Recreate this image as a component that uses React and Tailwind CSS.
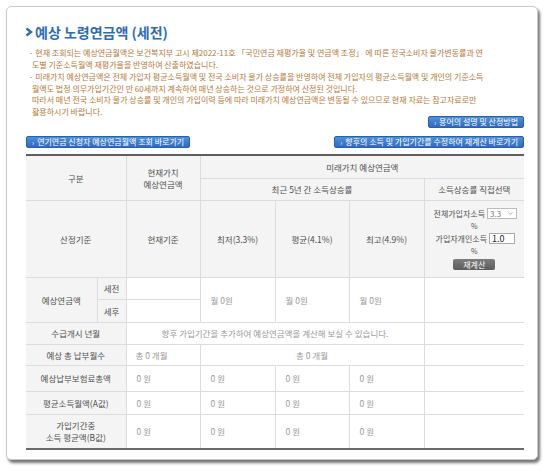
import { ChevronDown } from 'lucide-react';

const font = { fontFamily: '"Noto Sans CJK KR", "Noto Sans", sans-serif' };

// table cell presets
const th = 'border border-[#dcdcdc] bg-[#f4f4f4] text-center align-middle font-normal text-[#505050]';
const td = 'border border-[#dcdcdc] bg-white align-middle text-[#999]';

function LinkButton({ children }) {
  return (
    <button className="h-[12px] px-[5px] rounded-[2px] border border-[#2a5fa9] bg-gradient-to-b from-[#4f8fd9] to-[#2f6bbf] text-white text-[8px] leading-[10px] whitespace-nowrap flex items-center gap-[3px]">
      <span className="text-[7px]">›</span>
      {children}
    </button>
  );
}

function RateForm() {
  return (
    <div className="flex flex-col items-center text-[8px] leading-[12px] text-[#505050]">
      <div className="flex items-center gap-[2px] pl-[2px]">
        <span>전체가입자소득</span>
        <span className="inline-flex items-center h-[11px] w-[30px] border border-[#bbb] bg-white px-[2px] justify-between">
          <select className="appearance-none bg-transparent text-[8px] leading-[9px] text-[#777] outline-none w-[16px]" defaultValue="3.3">
            <option>3.3</option>
            <option>4.1</option>
            <option>4.9</option>
          </select>
          <ChevronDown size={7} strokeWidth={2} className="text-[#777]" />
        </span>
      </div>
      <span className="text-[7px] leading-[13px]">%</span>
      <div className="flex items-center gap-[2px] pl-[2px]">
        <span>가입자개인소득</span>
        <input
          readOnly
          value="1.0"
          className="h-[11px] w-[26px] border border-[#aaa] bg-white px-[2px] text-[9px] leading-[9px] text-[#222] outline-none"
        />
      </div>
      <span className="text-[7px] leading-[13px]">%</span>
      <button className="mt-[1px] h-[11px] px-[10px] rounded-[2px] bg-gradient-to-b from-[#7d7d7d] to-[#5c5c5c] text-white text-[8px] leading-[11px]">
        재계산
      </button>
    </div>
  );
}

export default function App() {
  return (
    <div className="w-[550px] h-[474px] bg-white p-[6px] pr-[12px] pb-[14px]" style={font}>
      <div className="h-full rounded-[5px] border border-[#c8c8c8] bg-white shadow-[2px_3px_3px_rgba(0,0,0,0.55)] pl-[19px] pr-[13px] pt-[17px]">
        {/* Title */}
        <h1 className="flex items-center gap-[2px] -ml-[1px] h-[16px] text-[14px] font-bold text-[#2e6cb5] leading-[16px]">
          <svg width="8" height="10" viewBox="0 0 8 10" className="shrink-0">
            <polyline points="1.5,1.5 6,5 1.5,8.5" fill="none" stroke="#2e6cb5" strokeWidth="2.4" />
          </svg>
          예상 노령연금액 (세전)
        </h1>

        {/* Notices */}
        <div className="mt-[7px] text-[8px] leading-[11.5px] text-[#b5783a] whitespace-nowrap">
          <p className="pl-[6px] -indent-[3px]">
            · 현재 조회되는 예상연금월액은 보건복지부 고시 제2022-11호 「국민연금 재평가율 및 연금액 조정」 에 따른 전국소비자 물가변동률과 연<br />
            도별 기준소득월액 재평가율을 반영하여 산출하였습니다.
          </p>
          <p className="mt-[1px] pl-[6px] -indent-[3px]">
            · 미래가치 예상연금액은 전체 가입자 평균소득월액 및 전국 소비자 물가 상승률을 반영하여 전체 가입자의 평균소득월액 및 개인의 기준소득<br />
            월액도 법정 의무가입기간인 만 60세까지 계속하여 매년 상승하는 것으로 가정하여 산정된 것입니다.<br />
            따라서 매년 전국 소비자 물가 상승률 및 개인의 가입이력 등에 따라 미래가치 예상연금액은 변동될 수 있으므로 현재 자료는 참고자료로만<br />
            활용하시기 바랍니다.
          </p>
        </div>

        {/* Shortcut buttons */}
        <div className="flex justify-end -mt-[1px]">
          <LinkButton>용어의 설명 및 산정방법</LinkButton>
        </div>
        <div className="mt-[8px] flex justify-between">
          <LinkButton>연기연금 신청자 예상연금월액 조회 바로가기</LinkButton>
          <LinkButton>향후의 소득 및 가입기간를 수정하여 재계산 바로가기</LinkButton>
        </div>

        {/* Pension table */}
        <table className="mt-[6px] w-[498px] table-fixed border-collapse border-t-2 border-t-[#5e5e5e] border-b-2 border-b-[#6a6a6a] text-[8.5px] leading-[12px]">
          <colgroup>
            <col className="w-[71px]" />
            <col className="w-[29px]" />
            <col className="w-[74px]" />
            <col className="w-[75px]" />
            <col className="w-[74px]" />
            <col className="w-[75px]" />
            <col className="w-[100px]" />
          </colgroup>
          <tbody>
            <tr className="h-[23px]">
              <th rowSpan={2} colSpan={2} className={`${th} border-l-0`}>구분</th>
              <th rowSpan={2} className={th}>현재가치<br />예상연금액</th>
              <th colSpan={4} className={`${th} border-r-0`}>미래가치 예상연금액</th>
            </tr>
            <tr className="h-[22px]">
              <th colSpan={3} className={th}>최근 5년 간 소득상승률</th>
              <th className={`${th} border-r-0`}>소득상승률 직접선택</th>
            </tr>
            <tr className="h-[77px]">
              <th colSpan={2} className={`${th} border-l-0`}>산정기준</th>
              <th className={th}>현재기준</th>
              <th className={th}>최저(3.3%)</th>
              <th className={th}>평균(4.1%)</th>
              <th className={th}>최고(4.9%)</th>
              <th className={`${th} border-r-0`}>
                <RateForm />
              </th>
            </tr>
            <tr className="h-[22px]">
              <th rowSpan={2} className={`${th} border-l-0`}>예상연금액</th>
              <th className={th}>세전</th>
              <td className={td}></td>
              <td rowSpan={2} className={`${td} pl-[10px] text-[#3d6ea6]`}>월 0원</td>
              <td rowSpan={2} className={`${td} pl-[10px] text-[#3d6ea6]`}>월 0원</td>
              <td rowSpan={2} className={`${td} pl-[10px] text-[#3d6ea6]`}>월 0원</td>
              <td rowSpan={2} className={`${td} border-r-0`}></td>
            </tr>
            <tr className="h-[23px]">
              <th className={th}>세후</th>
              <td className={td}></td>
            </tr>
            <tr className="h-[22px]">
              <th colSpan={2} className={`${th} border-l-0`}>수급개시 년월</th>
              <td colSpan={4} className={`${td} text-center`}>
                향후 가입기간을 추가하여 예상연금액을 계산해 보실 수 있습니다.
              </td>
              <td className={`${td} border-r-0`}></td>
            </tr>
            <tr className="h-[21px]">
              <th colSpan={2} className={`${th} border-l-0`}>예상 총 납부월수</th>
              <td className={`${td} pl-[9px]`}>총 0 개월</td>
              <td colSpan={3} className={`${td} text-center`}>총 0 개월</td>
              <td className={`${td} border-r-0`}></td>
            </tr>
            <tr className="h-[26px]">
              <th colSpan={2} className={`${th} border-l-0`}>예상납부보험료총액</th>
              <td className={`${td} pl-[10px]`}>0 원</td>
              <td className={`${td} pl-[10px]`}>0 원</td>
              <td className={`${td} pl-[10px]`}>0 원</td>
              <td className={`${td} pl-[10px]`}>0 원</td>
              <td className={`${td} border-r-0`}></td>
            </tr>
            <tr className="h-[23px]">
              <th colSpan={2} className={`${th} border-l-0`}>평균소득월액(A값)</th>
              <td className={`${td} pl-[10px]`}>0 원</td>
              <td className={`${td} pl-[10px]`}>0 원</td>
              <td className={`${td} pl-[10px]`}>0 원</td>
              <td className={`${td} pl-[10px]`}>0 원</td>
              <td className={`${td} border-r-0`}></td>
            </tr>
            <tr className="h-[35px]">
              <th colSpan={2} className={`${th} border-l-0`}>가입기간중<br />소득 평균액(B값)</th>
              <td className={`${td} pl-[10px]`}>0 원</td>
              <td className={`${td} pl-[10px]`}>0 원</td>
              <td className={`${td} pl-[10px]`}>0 원</td>
              <td className={`${td} pl-[10px]`}>0 원</td>
              <td className={`${td} border-r-0`}></td>
            </tr>
          </tbody>
        </table>
      </div>
    </div>
  );
}
